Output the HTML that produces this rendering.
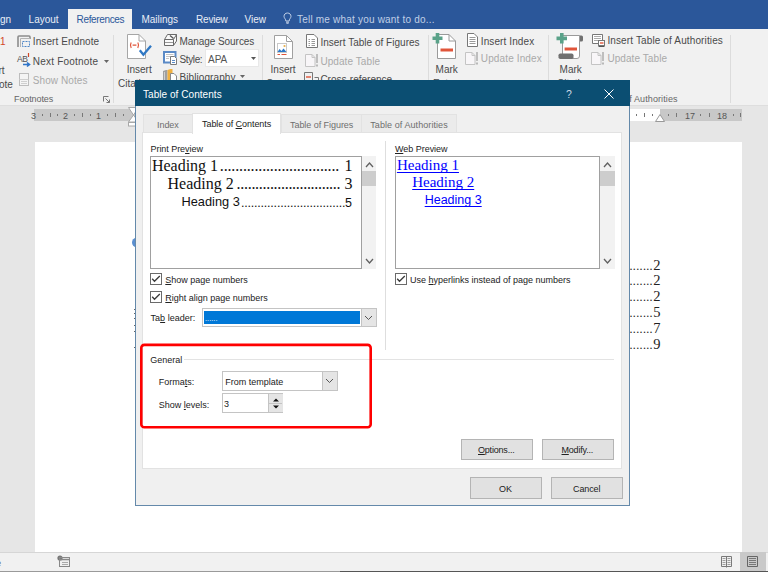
<!DOCTYPE html>
<html><head><meta charset="utf-8">
<style>
*{margin:0;padding:0;box-sizing:border-box}
html,body{width:768px;height:572px;overflow:hidden;background:#e6e6e6;font-family:"Liberation Sans",sans-serif;position:relative}
.t{position:absolute;white-space:nowrap;line-height:1}
.b{position:absolute}
svg{position:absolute;overflow:visible}
u{text-decoration:underline;text-underline-offset:1px;text-decoration-skip-ink:none}
</style></head><body>
<div class="b" style="left:0px;top:0px;width:768px;height:29px;background:#2b579a"></div>
<div class="b" style="left:68px;top:9px;width:64px;height:20px;background:#f1f1f1"></div>
<div class="t" style="left:0.0px;top:15.23px;font-size:10px;color:#e9eef6;">gn</div>
<div class="t" style="left:28.6px;top:15.23px;font-size:10px;color:#e9eef6;">Layout</div>
<div class="t" style="left:76.6px;top:15.23px;font-size:10px;color:#2b579a;letter-spacing:-0.35px;">References</div>
<div class="t" style="left:141.4px;top:15.23px;font-size:10px;color:#e9eef6;">Mailings</div>
<div class="t" style="left:196.0px;top:15.23px;font-size:10px;color:#e9eef6;letter-spacing:-0.2px;">Review</div>
<div class="t" style="left:244.5px;top:15.23px;font-size:10px;color:#e9eef6;">View</div>
<div class="t" style="left:297.0px;top:15.23px;font-size:10px;color:#c0cfe6;letter-spacing:0.2px;">Tell me what you want to do...</div>
<svg style="left:283px;top:12px" width="9" height="12" viewBox="0 0 9 12"><path d="M4.5 1 C2.3 1 1 2.6 1 4.3 C1 5.8 2.2 6.6 2.6 7.8 L2.8 9 L6.2 9 L6.4 7.8 C6.8 6.6 8 5.8 8 4.3 C8 2.6 6.7 1 4.5 1 Z M3 10.2 L6 10.2 M3.4 11.3 L5.6 11.3" fill="none" stroke="#c0cfe6" stroke-width="1"/></svg>
<div class="b" style="left:0px;top:29px;width:768px;height:77px;background:#f1f1f1;border-bottom:1px solid #dedede"></div>
<div class="b" style="left:113px;top:35px;width:1px;height:68px;background:#dcdcdc"></div>
<div class="b" style="left:262px;top:35px;width:1px;height:68px;background:#dcdcdc"></div>
<div class="b" style="left:428px;top:35px;width:1px;height:68px;background:#dcdcdc"></div>
<div class="b" style="left:548px;top:35px;width:1px;height:68px;background:#dcdcdc"></div>
<div class="b" style="left:730px;top:35px;width:1px;height:68px;background:#dcdcdc"></div>
<div class="t" style="left:0.0px;top:37.03px;font-size:10px;color:#d24726;">1</div>
<div class="t" style="left:-1.5px;top:65.83px;font-size:10px;color:#4a4a4a;">rt</div>
<div class="t" style="left:-1.0px;top:79.53px;font-size:10px;color:#4a4a4a;">ote</div>
<div class="t" style="left:32.8px;top:37.43px;font-size:10px;color:#4a4a4a;letter-spacing:0.1px;">Insert Endnote</div>
<div class="t" style="left:32.8px;top:56.83px;font-size:10px;color:#4a4a4a;letter-spacing:0.2px;">Next Footnote</div>
<div class="t" style="left:32.8px;top:76.03px;font-size:10px;color:#a9a9a9;letter-spacing:0.08px;">Show Notes</div>
<div class="t" style="left:14.0px;top:94.78px;font-size:9px;color:#666;letter-spacing:-0.1px;">Footnotes</div>
<svg style="left:103px;top:96px" width="8" height="7" viewBox="0 0 8 7"><path d="M0.5 0.5 H5.5 M0.5 0.5 V5.5 M2.5 2.5 L6.5 6.5 M6.5 3.5 V6.5 H3.5" fill="none" stroke="#777" stroke-width="1"/></svg>
<svg style="left:104px;top:60px" width="5" height="3" viewBox="0 0 5 3"><path d="M0 0 H5 L2.5 3 Z" fill="#666"/></svg>
<svg style="left:17px;top:35px" width="14" height="13" viewBox="0 0 14 13"><path d="M1 12 V2 Q1 1 2 1 H12 Q13 1 13 2 V4" fill="none" stroke="#8c8c8c" stroke-width="1.6"/><path d="M3.5 12 V3.5 H13" fill="none" stroke="#b4b4b4" stroke-width="1"/><path d="M5.5 6.5 H12.5 V11.5 H5.5 Z" fill="none" stroke="#4f86c6" stroke-width="1" stroke-dasharray="2 1"/></svg>
<svg style="left:17px;top:52px" width="14" height="15" viewBox="0 0 14 15"><text x="0" y="10" font-size="8.5" font-family="Liberation Sans" fill="#505050" letter-spacing="-0.5">AB</text><path d="M11.5 1 V5" stroke="#d24726" stroke-width="1.2"/><path d="M6 12.5 H12 M10 10.5 L12.5 12.5 L10 14.5" fill="none" stroke="#2f74c8" stroke-width="1.6"/></svg>
<svg style="left:19px;top:73px" width="10" height="13" viewBox="0 0 10 13"><rect x="0.5" y="0.5" width="9" height="12" fill="#f4f4f4" stroke="#bdbdbd"/><path d="M0.5 6.5 H9.5 M2 8.5 H8 M2 10.5 H8" stroke="#cfcfcf"/></svg>
<svg style="left:127px;top:34px" width="25" height="25" viewBox="0 0 25 25"><path d="M0.5 0.5 H12 L18.5 7 V24.5 H0.5 Z" fill="#fff" stroke="#a6a6a6"/><path d="M12 0.5 V7 H18.5" fill="none" stroke="#a6a6a6"/><path d="M4.2 8.5 Q2.6 11.2 4.2 14 M10.8 8.5 Q12.4 11.2 10.8 14 M5.6 11.2 H9.4" fill="none" stroke="#e0553a" stroke-width="1.2"/><path d="M12.8 16.2 L16.4 20.8 L24 11.8" fill="none" stroke="#2f78c4" stroke-width="2.3"/></svg>
<div class="t" style="left:126.7px;top:65.33px;font-size:10px;color:#4a4a4a;">Insert</div>
<div class="t" style="left:118.0px;top:78.83px;font-size:10px;color:#4a4a4a;">Citation</div>
<svg style="left:164px;top:34px" width="13" height="12" viewBox="0 0 13 12"><path d="M0.5 5.5 H9.5 V11.5 H0.5 Z M0.5 5.5 L3.5 0.5 H12.5 V7 L9.5 11.5 M9.5 5.5 L12.5 0.5" fill="#fafafa" stroke="#6a6a6a"/><path d="M1 8.5 H9" stroke="#999"/><path d="M6 1.5 L9.5 4.5" stroke="#555" stroke-width="1.3"/></svg>
<div class="t" style="left:179.4px;top:36.83px;font-size:10px;color:#4a4a4a;letter-spacing:-0.05px;">Manage Sources</div>
<svg style="left:163px;top:51px" width="14" height="14" viewBox="0 0 14 14"><rect x="1" y="1" width="11.5" height="10.5" fill="#fff" stroke="#5b8ac6" stroke-width="2"/><path d="M3 3.5 H10.5 M3 5.5 H10.5 M3 7.5 H6" stroke="#c4c4c4"/><path d="M7.5 5.5 H11.5 L13.5 7.5 V13.5 H7.5 Z" fill="#fff" stroke="#7a7a7a"/><path d="M9 9.5 H12 M9 11.5 H12" stroke="#5b8ac6"/></svg>
<div class="t" style="left:179.4px;top:54.53px;font-size:10px;color:#4a4a4a;letter-spacing:-0.35px;">Style:</div>
<div class="b" style="left:205px;top:49px;width:54px;height:18px;background:#fff;border:1px solid #e8e8e8"></div>
<div class="t" style="left:208.0px;top:54.53px;font-size:10px;color:#555;">APA</div>
<svg style="left:251px;top:57px" width="5" height="3" viewBox="0 0 5 3"><path d="M0 0 H5 L2.5 3 Z" fill="#555"/></svg>
<svg style="left:163px;top:69px" width="14" height="12" viewBox="0 0 14 12"><path d="M0 2 L3 1 H4.5 V12 H0 Z" fill="#a0a0a0"/><path d="M1.5 3 V12" stroke="#d0d0d0"/><path d="M4.5 1 L7.5 0 H9.5 V12 H4.5 Z" fill="#f0b040"/><path d="M7.5 4.5 H11 L13.5 7 V12 H7.5 Z" fill="#fff" stroke="#888"/></svg>
<div class="t" style="left:179.4px;top:73.03px;font-size:10px;color:#4a4a4a;letter-spacing:0.1px;">Bibliography</div>
<svg style="left:240px;top:75px" width="5" height="3" viewBox="0 0 5 3"><path d="M0 0 H5 L2.5 3 Z" fill="#666"/></svg>
<svg style="left:274px;top:35px" width="20" height="25" viewBox="0 0 20 25"><path d="M0.5 0.5 H12.5 L18.5 6.5 V23.5 H0.5 Z" fill="#fff" stroke="#a0a0a0"/><path d="M12.5 0.5 V6.5 H18.5" fill="none" stroke="#a0a0a0"/><rect x="3.5" y="8.5" width="9" height="9" fill="#fff" stroke="#c8c8c8"/><path d="M3.5 17 L5.5 14 L7.5 16 L9.5 13.5 L12.5 17 Z" fill="#2b78c8"/><circle cx="10.5" cy="11" r="1.1" fill="#e8b04a"/><path d="M3.5 19.5 H6 M7.5 19.5 H12.5" stroke="#e0553a" stroke-width="1"/></svg>
<div class="t" style="left:270.6px;top:64.83px;font-size:10px;color:#4a4a4a;">Insert</div>
<div class="t" style="left:266.0px;top:78.83px;font-size:10px;color:#4a4a4a;">Caption</div>
<svg style="left:306px;top:34px" width="12" height="14" viewBox="0 0 12 14"><path d="M0.5 0.5 H8 L11.5 4 V13.5 H0.5 Z" fill="#fff" stroke="#777"/><path d="M2.5 5.5 H4 M5.5 5.5 H9 M2.5 7.5 H4 M5.5 7.5 H9 M2.5 9.5 H4 M5.5 9.5 H9 M2.5 11.5 H4 M5.5 11.5 H9" stroke="#999"/></svg>
<div class="t" style="left:320.4px;top:37.83px;font-size:10px;color:#4a4a4a;letter-spacing:0.02px;">Insert Table of Figures</div>
<svg style="left:305px;top:54px" width="14" height="13" viewBox="0 0 14 13"><path d="M0.5 0.5 H7 L10 3.5 V12.5 H0.5 Z" fill="#f8f6f8" stroke="#c4c4c4"/><path d="M7 0.5 V3.5 H10" fill="none" stroke="#c4c4c4"/><path d="M12 0 V9" stroke="#b8b8b8" stroke-width="1.8"/><rect x="11" y="10.5" width="2" height="2" fill="#b8b8b8"/></svg>
<div class="t" style="left:320.4px;top:56.53px;font-size:10px;color:#a9a9a9;letter-spacing:0.08px;">Update Table</div>
<svg style="left:304px;top:72px" width="16" height="9" viewBox="0 0 16 9"><path d="M0.5 0.5 H8.5 V9 M0.5 0.5 V9" fill="none" stroke="#777"/><path d="M2 5 H7" stroke="#e0553a" stroke-width="1.4"/><path d="M10.5 5.5 H14.5 V9" fill="none" stroke="#777"/></svg>
<div class="t" style="left:320.4px;top:75.03px;font-size:10px;color:#4a4a4a;">Cross-reference</div>
<svg style="left:432px;top:33px" width="26" height="26" viewBox="0 0 26 26"><path d="M5.5 1.5 H17 L23.5 8 V25.5 H5.5 Z" fill="#fff" stroke="#9a9a9a"/><path d="M17 1.5 V8 H23.5" fill="none" stroke="#9a9a9a"/><path d="M5.5 0 V10.5 M0.5 5.25 H10.5" stroke="#5aa289" stroke-width="3.6"/><path d="M8.5 17 H21" stroke="#e0553a" stroke-width="3"/></svg>
<div class="t" style="left:435.6px;top:64.83px;font-size:10px;color:#4a4a4a;">Mark</div>
<div class="t" style="left:433.0px;top:78.83px;font-size:10px;color:#4a4a4a;">Entry</div>
<svg style="left:467px;top:33px" width="11" height="14" viewBox="0 0 11 14"><path d="M0.5 0.5 H7 L10.5 4 V13.5 H0.5 Z" fill="#fff" stroke="#777"/><path d="M2.5 4.5 H8.5 M2.5 6.5 H8.5 M2.5 8.5 H8.5 M2.5 10.5 H8.5" stroke="#999"/></svg>
<div class="t" style="left:480.8px;top:36.53px;font-size:10px;color:#4a4a4a;letter-spacing:0.1px;">Insert Index</div>
<svg style="left:465px;top:52px" width="14" height="13" viewBox="0 0 14 13"><path d="M0.5 0.5 H7 L10 3.5 V12.5 H0.5 Z" fill="#f8f6f8" stroke="#c4c4c4"/><path d="M7 0.5 V3.5 H10" fill="none" stroke="#c4c4c4"/><path d="M12 0 V9" stroke="#b8b8b8" stroke-width="1.8"/><rect x="11" y="10.5" width="2" height="2" fill="#b8b8b8"/></svg>
<div class="t" style="left:480.8px;top:54.43px;font-size:10px;color:#a9a9a9;letter-spacing:0.13px;">Update Index</div>
<svg style="left:556px;top:33px" width="28" height="27" viewBox="0 0 28 27"><rect x="21" y="2.5" width="6" height="6" rx="1.5" fill="#707070"/><path d="M6.5 2.5 H23.5 V23 Q23.5 25.5 21 25.5 H6.5 Z" fill="#fff" stroke="#9a9a9a"/><rect x="2.5" y="20.5" width="15" height="5.5" rx="1.8" fill="#707070"/><path d="M5.8 0 V10.5 M0.5 5.4 H11" stroke="#5aa289" stroke-width="3.6"/><path d="M8.6 16 H21" stroke="#e0553a" stroke-width="3"/></svg>
<div class="t" style="left:559.6px;top:64.83px;font-size:10px;color:#4a4a4a;">Mark</div>
<div class="t" style="left:557.0px;top:78.83px;font-size:10px;color:#4a4a4a;">Citation</div>
<svg style="left:592px;top:34px" width="14" height="13" viewBox="0 0 14 13"><path d="M0.5 0.5 H10.5 V9.5 H0.5 Z" fill="#fff" stroke="#777"/><path d="M2 2.5 H9 M2 4.5 H9 M2 6.5 H6" stroke="#aaa"/><rect x="6.5" y="6.5" width="6" height="5" fill="#fff" stroke="#777"/><path d="M8 9 H11.5" stroke="#e0553a" stroke-width="1.4"/><path d="M6.5 12.5 H12.5" stroke="#555"/></svg>
<div class="t" style="left:607.4px;top:35.73px;font-size:10px;color:#4a4a4a;letter-spacing:0.13px;">Insert Table of Authorities</div>
<svg style="left:591px;top:52px" width="14" height="13" viewBox="0 0 14 13"><path d="M0.5 0.5 H7 L10 3.5 V12.5 H0.5 Z" fill="#f8f6f8" stroke="#c4c4c4"/><path d="M7 0.5 V3.5 H10" fill="none" stroke="#c4c4c4"/><path d="M12 0 V9" stroke="#b8b8b8" stroke-width="1.8"/><rect x="11" y="10.5" width="2" height="2" fill="#b8b8b8"/></svg>
<div class="t" style="left:607.4px;top:54.03px;font-size:10px;color:#a9a9a9;letter-spacing:0.08px;">Update Table</div>
<div class="t" style="left:629.3px;top:94.78px;font-size:9px;color:#666;letter-spacing:0.1px;">f Authorities</div>
<div class="b" style="left:34px;top:109px;width:708px;height:12px;background:#c8c8c8"></div>
<div class="b" style="left:629px;top:109px;width:31px;height:12px;background:#fff"></div>
<div class="t" style="left:31.0px;top:111.88px;font-size:9px;color:#555;">3</div>
<div class="t" style="left:63.0px;top:111.88px;font-size:9px;color:#555;">2</div>
<div class="t" style="left:96.0px;top:111.88px;font-size:9px;color:#555;">1</div>
<div class="t" style="left:685.0px;top:111.88px;font-size:9px;color:#555;">17</div>
<div class="t" style="left:717.0px;top:111.88px;font-size:9px;color:#555;">18</div>
<div class="b" style="left:42px;top:114px;width:1px;height:2px;background:#777"></div>
<div class="b" style="left:50px;top:114px;width:1px;height:2px;background:#777"></div>
<div class="b" style="left:57px;top:114px;width:1px;height:2px;background:#777"></div>
<div class="b" style="left:74px;top:114px;width:1px;height:2px;background:#777"></div>
<div class="b" style="left:82px;top:114px;width:1px;height:2px;background:#777"></div>
<div class="b" style="left:90px;top:114px;width:1px;height:2px;background:#777"></div>
<div class="b" style="left:107px;top:114px;width:1px;height:2px;background:#777"></div>
<div class="b" style="left:115px;top:114px;width:1px;height:2px;background:#777"></div>
<div class="b" style="left:123px;top:114px;width:1px;height:2px;background:#777"></div>
<div class="b" style="left:636px;top:114px;width:1px;height:2px;background:#777"></div>
<div class="b" style="left:644px;top:114px;width:1px;height:2px;background:#777"></div>
<div class="b" style="left:652px;top:114px;width:1px;height:2px;background:#777"></div>
<div class="b" style="left:668px;top:114px;width:1px;height:2px;background:#777"></div>
<div class="b" style="left:676px;top:114px;width:1px;height:2px;background:#777"></div>
<div class="b" style="left:700px;top:114px;width:1px;height:2px;background:#777"></div>
<div class="b" style="left:709px;top:114px;width:1px;height:2px;background:#777"></div>
<div class="b" style="left:733px;top:114px;width:1px;height:2px;background:#777"></div>
<div class="b" style="left:740px;top:114px;width:1px;height:2px;background:#777"></div>
<div class="b" style="left:50px;top:113px;width:1px;height:4px;background:#777"></div>
<div class="b" style="left:82px;top:113px;width:1px;height:4px;background:#777"></div>
<div class="b" style="left:115px;top:113px;width:1px;height:4px;background:#777"></div>
<div class="b" style="left:644px;top:113px;width:1px;height:4px;background:#777"></div>
<div class="b" style="left:676px;top:113px;width:1px;height:4px;background:#777"></div>
<div class="b" style="left:709px;top:113px;width:1px;height:4px;background:#777"></div>
<div class="b" style="left:740px;top:113px;width:1px;height:4px;background:#777"></div>
<svg style="left:128px;top:107px" width="11" height="20" viewBox="0 0 11 20"><path d="M0.5 0.5 H10.5 L5.5 8 L10.5 15 H0.5 L5.5 8 Z" fill="#fff" stroke="#a8a8a8"/><rect x="0.5" y="15.5" width="10" height="3.5" fill="#fff" stroke="#a8a8a8"/></svg>
<svg style="left:655px;top:114px" width="10" height="8" viewBox="0 0 10 8"><path d="M5 0.5 L9.5 7.5 H0.5 Z" fill="#fff" stroke="#999"/></svg>
<div class="b" style="left:35px;top:142px;width:707px;height:410px;background:#fff"></div>
<div class="t" style="left:629.5px;top:259.95px;font-size:12px;color:#222;letter-spacing:0.35px;font-family:'Liberation Serif',serif;">.......</div>
<div class="t" style="left:653.2px;top:257.86px;font-size:14.5px;color:#222;font-family:'Liberation Serif',serif;">2</div>
<div class="t" style="left:629.5px;top:274.75px;font-size:12px;color:#222;letter-spacing:0.35px;font-family:'Liberation Serif',serif;">.......</div>
<div class="t" style="left:653.2px;top:272.66px;font-size:14.5px;color:#222;font-family:'Liberation Serif',serif;">2</div>
<div class="t" style="left:629.5px;top:290.95px;font-size:12px;color:#222;letter-spacing:0.35px;font-family:'Liberation Serif',serif;">.......</div>
<div class="t" style="left:653.2px;top:288.86px;font-size:14.5px;color:#222;font-family:'Liberation Serif',serif;">2</div>
<div class="t" style="left:629.5px;top:307.15px;font-size:12px;color:#222;letter-spacing:0.35px;font-family:'Liberation Serif',serif;">.......</div>
<div class="t" style="left:653.2px;top:305.06px;font-size:14.5px;color:#222;font-family:'Liberation Serif',serif;">5</div>
<div class="t" style="left:629.5px;top:322.95px;font-size:12px;color:#222;letter-spacing:0.35px;font-family:'Liberation Serif',serif;">.......</div>
<div class="t" style="left:653.2px;top:320.86px;font-size:14.5px;color:#222;font-family:'Liberation Serif',serif;">7</div>
<div class="t" style="left:629.5px;top:338.65px;font-size:12px;color:#222;letter-spacing:0.35px;font-family:'Liberation Serif',serif;">.......</div>
<div class="t" style="left:653.2px;top:336.56px;font-size:14.5px;color:#222;font-family:'Liberation Serif',serif;">9</div>
<div class="b" style="left:132px;top:238px;width:8px;height:9px;background:#5b8fd0;border-radius:50%"></div>
<div class="b" style="left:134px;top:309px;width:1px;height:1px;background:#666"></div>
<div class="b" style="left:134px;top:313px;width:1px;height:1px;background:#666"></div>
<div class="b" style="left:134px;top:318px;width:1px;height:1px;background:#666"></div>
<div class="b" style="left:134px;top:325px;width:1px;height:1px;background:#666"></div>
<div class="b" style="left:134px;top:331px;width:1px;height:1px;background:#666"></div>
<div class="b" style="left:134px;top:347px;width:1px;height:1px;background:#666"></div>
<div class="b" style="left:0px;top:552px;width:768px;height:19px;background:#f1f1f1;border-top:1px solid #d6d6d6"></div>
<div class="b" style="left:0px;top:571px;width:340px;height:1px;background:#9a9a9a"></div>
<div class="b" style="left:340px;top:571px;width:428px;height:1px;background:#555"></div>
<div class="t" style="left:-4.0px;top:559.38px;font-size:9px;color:#555;">e</div>
<svg style="left:57px;top:555px" width="13" height="12" viewBox="0 0 13 12"><circle cx="3" cy="3" r="2.6" fill="#777"/><rect x="2.5" y="2.5" width="10" height="9" fill="none" stroke="#888"/><path d="M2.5 4.5 H12.5" stroke="#888" stroke-width="1.5"/><path d="M5 7.5 H11 M5 9.5 H11" stroke="#aaa"/></svg>
<div class="b" style="left:740px;top:552px;width:26px;height:19px;background:#c9c9c9"></div>
<svg style="left:721px;top:556px" width="12" height="12" viewBox="0 0 12 12"><path d="M0.5 0.5 H10.5 V10.5 H0.5 Z M5.5 0 V11.5" fill="none" stroke="#7a7a7a"/><path d="M1.5 2.5 H4.5 M1.5 4.5 H4.5 M1.5 6.5 H4.5 M1.5 8.5 H4.5 M6.5 2.5 H9.5 M6.5 4.5 H9.5 M6.5 6.5 H9.5 M6.5 8.5 H9.5" stroke="#a0a0a0"/></svg>
<svg style="left:747px;top:556px" width="12" height="12" viewBox="0 0 12 12"><path d="M0.5 0.5 H10.5 V10.5 H0.5 Z" fill="none" stroke="#666"/><path d="M2 2.5 H9 M2 4.5 H9 M2 6.5 H9 M2 8.5 H9" stroke="#777"/></svg>
<div class="b" style="left:135px;top:80px;width:495px;height:426px;background:#f0f0f0;border:1px solid #6489aa"></div>
<div class="b" style="left:135px;top:80px;width:495px;height:26px;background:#0b4e72"></div>
<div class="t" style="left:143.0px;top:90.13px;font-size:10px;color:#ffffff;letter-spacing:0.05px;">Table of Contents</div>
<div class="t" style="left:566.0px;top:89.11px;font-size:10.5px;color:#cbd9e4;">?</div>
<svg style="left:604px;top:89px" width="10" height="10" viewBox="0 0 10 10"><path d="M0.5 0.5 L9.5 9.5 M9.5 0.5 L0.5 9.5" stroke="#ffffff" stroke-width="1"/></svg>
<div class="b" style="left:143px;top:114px;width:50px;height:19px;background:#ebebeb;border:1px solid #e2e2e2;border-bottom:none"></div>
<div class="b" style="left:281px;top:114px;width:81px;height:19px;background:#ebebeb;border:1px solid #e2e2e2;border-bottom:none"></div>
<div class="b" style="left:362px;top:114px;width:95px;height:19px;background:#ebebeb;border:1px solid #e2e2e2;border-bottom:none;border-left:none"></div>
<div class="b" style="left:142px;top:132px;width:480px;height:337px;background:#fff;border:1px solid #e2e2e2"></div>
<div class="b" style="left:192px;top:113px;width:89px;height:21px;background:#fff;border:1px solid #e2e2e2;border-bottom:none"></div>
<div class="t" style="left:157.0px;top:120.88px;font-size:9px;color:#6e6e6e;letter-spacing:-0.05px;">Index</div>
<div class="t" style="left:202.0px;top:120.38px;font-size:9px;color:#222;letter-spacing:-0.05px;">Table of <u>C</u>ontents</div>
<div class="t" style="left:290.0px;top:120.88px;font-size:9px;color:#6e6e6e;letter-spacing:-0.05px;">Table of Figures</div>
<div class="t" style="left:370.3px;top:120.88px;font-size:9px;color:#6e6e6e;letter-spacing:0.07px;">Table of Authorities</div>
<div class="b" style="left:385px;top:141px;width:1px;height:209px;background:#dedede"></div>
<div class="t" style="left:150.5px;top:144.58px;font-size:9px;color:#222;letter-spacing:-0.05px;">Print Pre<u>v</u>iew</div>
<div class="t" style="left:395.0px;top:144.78px;font-size:9px;color:#222;letter-spacing:-0.03px;"><u>W</u>eb Preview</div>
<div class="b" style="left:150px;top:156px;width:212px;height:113px;background:#fff;border:1px solid #a0a0a0"></div>
<div class="b" style="left:362px;top:156px;width:14px;height:113px;background:#f2f2f2"></div>
<div class="b" style="left:362px;top:171px;width:14px;height:15px;background:#cdcdcd"></div>
<svg style="left:365px;top:162px" width="9" height="6" viewBox="0 0 9 6"><path d="M1 5 L4.5 1 L8 5" fill="none" stroke="#606060" stroke-width="1.3"/></svg>
<svg style="left:365px;top:258px" width="9" height="6" viewBox="0 0 9 6"><path d="M1 1 L4.5 5 L8 1" fill="none" stroke="#606060" stroke-width="1.3"/></svg>
<div class="t" style="left:151.9px;top:158.20px;font-size:16px;color:#111;font-family:'Liberation Serif',serif;">Heading 1</div>
<div class="t" style="left:219.8px;top:158.20px;font-size:16px;color:#111;letter-spacing:-0.15px;font-family:'Liberation Serif',serif;">...............................</div>
<div class="t" style="left:344.5px;top:158.20px;font-size:16px;color:#111;font-family:'Liberation Serif',serif;">1</div>
<div class="t" style="left:167.5px;top:175.90px;font-size:16px;color:#111;font-family:'Liberation Serif',serif;">Heading 2</div>
<div class="t" style="left:236.6px;top:175.90px;font-size:16px;color:#111;letter-spacing:-0.3px;font-family:'Liberation Serif',serif;">............................</div>
<div class="t" style="left:344.5px;top:175.90px;font-size:16px;color:#111;font-family:'Liberation Serif',serif;">3</div>
<div class="t" style="left:181.5px;top:196.46px;font-size:12.8px;color:#111;">Heading 3</div>
<div class="t" style="left:241.1px;top:196.72px;font-size:12.5px;color:#111;letter-spacing:-0.22px;">................................</div>
<div class="t" style="left:345.0px;top:196.72px;font-size:12.5px;color:#111;">5</div>
<div class="b" style="left:395px;top:156px;width:205px;height:113px;background:#fff;border:1px solid #a0a0a0"></div>
<div class="b" style="left:600px;top:156px;width:15px;height:113px;background:#f2f2f2"></div>
<div class="b" style="left:600px;top:171px;width:15px;height:15px;background:#cdcdcd"></div>
<svg style="left:603px;top:162px" width="9" height="6" viewBox="0 0 9 6"><path d="M1 5 L4.5 1 L8 5" fill="none" stroke="#606060" stroke-width="1.3"/></svg>
<svg style="left:603px;top:258px" width="9" height="6" viewBox="0 0 9 6"><path d="M1 1 L4.5 5 L8 1" fill="none" stroke="#606060" stroke-width="1.3"/></svg>
<div class="t" style="left:396.9px;top:157.94px;font-size:15px;color:#0000ff;font-family:'Liberation Serif',serif;"><u style="text-underline-offset:2px">Heading 1</u></div>
<div class="t" style="left:412.2px;top:175.14px;font-size:15px;color:#0000ff;font-family:'Liberation Serif',serif;"><u style="text-underline-offset:2px">Heading 2</u></div>
<div class="t" style="left:424.7px;top:194.42px;font-size:12.5px;color:#0000ff;"><u style="text-underline-offset:2px">Heading 3</u></div>
<svg style="left:150px;top:273px" width="12" height="12" viewBox="0 0 12 12"><rect x="0.5" y="0.5" width="11" height="11" fill="#fff" stroke="#6a6a6a"/><path d="M2.2 5.8 L4.5 8.3 L9.8 3" fill="none" stroke="#3a3a3a" stroke-width="1.3"/></svg>
<svg style="left:150px;top:291px" width="12" height="12" viewBox="0 0 12 12"><rect x="0.5" y="0.5" width="11" height="11" fill="#fff" stroke="#6a6a6a"/><path d="M2.2 5.8 L4.5 8.3 L9.8 3" fill="none" stroke="#3a3a3a" stroke-width="1.3"/></svg>
<svg style="left:395px;top:273px" width="12" height="12" viewBox="0 0 12 12"><rect x="0.5" y="0.5" width="11" height="11" fill="#fff" stroke="#6a6a6a"/><path d="M2.2 5.8 L4.5 8.3 L9.8 3" fill="none" stroke="#3a3a3a" stroke-width="1.3"/></svg>
<div class="t" style="left:165.3px;top:275.58px;font-size:9px;color:#222;"><u>S</u>how page numbers</div>
<div class="t" style="left:165.3px;top:293.68px;font-size:9px;color:#222;"><u>R</u>ight align page numbers</div>
<div class="t" style="left:410.0px;top:276.18px;font-size:9px;color:#222;">Use <u>h</u>yperlinks instead of page numbers</div>
<div class="t" style="left:150.6px;top:313.98px;font-size:9px;color:#222;">Ta<u>b</u> leader:</div>
<div class="b" style="left:202px;top:308px;width:175px;height:19px;background:#fff;border:1px solid #c4c4c4"></div>
<div class="b" style="left:204px;top:311px;width:156px;height:13px;background:#0078d7"></div>
<div class="b" style="left:361px;top:309px;width:15px;height:17px;background:#e5e5e5;border-left:1px solid #c4c4c4"></div>
<div class="t" style="left:205.0px;top:314.65px;font-size:7.5px;color:#fff;">......</div>
<svg style="left:364px;top:315px" width="9" height="6" viewBox="0 0 9 6"><path d="M1 1 L4.5 4.5 L8 1" fill="none" stroke="#555" stroke-width="1"/></svg>
<div class="b" style="left:184px;top:359px;width:430px;height:1px;background:#e3e3e3"></div>
<div class="t" style="left:150.3px;top:356.08px;font-size:9px;color:#222;">General</div>
<div class="t" style="left:158.8px;top:377.88px;font-size:9px;color:#222;">Forma<u>t</u>s:</div>
<div class="t" style="left:158.8px;top:400.68px;font-size:9px;color:#222;">Show <u>l</u>evels:</div>
<div class="b" style="left:222px;top:371px;width:116px;height:20px;background:#fff;border:1px solid #c4c4c4"></div>
<div class="b" style="left:322px;top:372px;width:15px;height:18px;background:#e5e5e5;border-left:1px solid #c4c4c4"></div>
<svg style="left:325px;top:378px" width="9" height="6" viewBox="0 0 9 6"><path d="M1 1 L4.5 4.5 L8 1" fill="none" stroke="#555" stroke-width="1"/></svg>
<div class="t" style="left:225.2px;top:377.88px;font-size:9px;color:#222;">From template</div>
<div class="b" style="left:222px;top:393px;width:61px;height:20px;background:#fff;border:1px solid #c4c4c4"></div>
<div class="b" style="left:268px;top:394px;width:15px;height:18px;background:#e5e5e5;border-left:1px solid #c4c4c4"></div>
<div class="b" style="left:269px;top:403px;width:13px;height:1px;background:#c4c4c4"></div>
<svg style="left:272px;top:397px" width="8" height="13" viewBox="0 0 8 13"><path d="M4 1.5 L7 4.5 H1 Z M1 8.5 H7 L4 11.5 Z" fill="#111"/></svg>
<div class="t" style="left:224.0px;top:400.38px;font-size:9px;color:#222;">3</div>
<svg style="left:140px;top:343px" width="232" height="86" viewBox="0 0 232 86"><rect x="1.3" y="1.9" width="229.4" height="82.3" rx="3" fill="none" stroke="#ff0000" stroke-width="2.6"/></svg>
<div class="b" style="left:461px;top:439px;width:72px;height:21px;background:#e1e1e1;border:1px solid #b4b4b4"></div>
<div class="b" style="left:542px;top:439px;width:72px;height:21px;background:#e1e1e1;border:1px solid #b4b4b4"></div>
<div class="b" style="left:470px;top:477px;width:72px;height:22px;background:#e1e1e1;border:1px solid #b4b4b4"></div>
<div class="b" style="left:551px;top:477px;width:72px;height:22px;background:#e1e1e1;border:1px solid #b4b4b4"></div>
<div class="t" style="left:478.0px;top:445.68px;font-size:9px;color:#222;letter-spacing:-0.2px;"><u>O</u>ptions...</div>
<div class="t" style="left:561.5px;top:445.68px;font-size:9px;color:#222;letter-spacing:-0.2px;"><u>M</u>odify...</div>
<div class="t" style="left:499.0px;top:484.58px;font-size:9px;color:#222;">OK</div>
<div class="t" style="left:573.0px;top:484.58px;font-size:9px;color:#222;letter-spacing:-0.1px;">Cancel</div>
</body></html>
